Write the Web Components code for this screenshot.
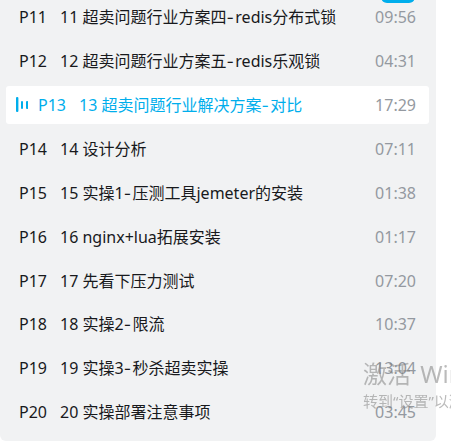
<!DOCTYPE html>
<html>
<head>
<meta charset="utf-8">
<style>
  html, body { margin: 0; height: 100%; overflow: hidden; background: #fff; }
</style>
</head>
<body>
<part-list>
  <part-row page="P11" time="09:56">11 超卖问题行业方案四<span class="dash">-</span>redis分布式锁</part-row>
  <part-row page="P12" time="04:31">12 超卖问题行业方案五<span class="dash">-</span>redis乐观锁</part-row>
  <part-row page="P13" time="17:29" active>13 超卖问题行业解决方案<span class="dash">-</span>对比</part-row>
  <part-row page="P14" time="07:11">14 设计分析</part-row>
  <part-row page="P15" time="01:38">15 实操1<span class="dash">-</span>压测工具jemeter的安装</part-row>
  <part-row page="P16" time="01:17">16 nginx+lua拓展安装</part-row>
  <part-row page="P17" time="07:20">17 先看下压力测试</part-row>
  <part-row page="P18" time="10:37">18 实操2<span class="dash">-</span>限流</part-row>
  <part-row page="P19" time="13:04">19 实操3<span class="dash">-</span>秒杀超卖实操</part-row>
  <part-row page="P20" time="03:45">20 实操部署注意事项</part-row>
</part-list>
<activation-mark></activation-mark>

<script>
class PartList extends HTMLElement {
  constructor() {
    super();
    this.attachShadow({ mode: "open" });
    this.shadowRoot.innerHTML = `
      <style>
        :host {
          display: block;
          width: 436px;
          height: 441px;
          box-sizing: border-box;
          padding: 0 7px 0 6px;
          background: #f1f2f3;
          border-radius: 0 0 6px 6px;
          font-family: "Noto Sans", "Noto Sans CJK SC", sans-serif;
          overflow: hidden;
          position: relative;
        }
        .rows {
          display: flex;
          flex-direction: column;
          gap: 5.9px;
          margin-top: -1.8px;
        }
        .blob {
          position: absolute;
          left: 381px;
          top: -9px;
          width: 34px;
          height: 12px;
          border-radius: 6px;
          background: #00aeec;
        }
      </style>
      <div class="rows"><slot></slot></div>
      <div class="blob"></div>
    `;
  }
}

class PartRow extends HTMLElement {
  constructor() {
    super();
    this.attachShadow({ mode: "open" });
  }

  connectedCallback() {
    const bars = this.hasAttribute("active") ? `
      <svg class="bars" width="12" height="15" viewBox="0 0 12 15">
        <rect x="0" y="0" width="2.4" height="15" rx="1"/>
        <rect x="5" y="4" width="2" height="8" rx="1"/>
        <rect x="10" y="4" width="2.2" height="8" rx="1"/>
      </svg>` : "";
    this.shadowRoot.innerHTML = `
      <style>
        :host {
          display: flex;
          align-items: center;
          height: 38px;
          padding: 0 13px;
          border-radius: 3px;
          font-size: 16px;
          line-height: 38px;
          color: #18191c;
        }
        :host([active]) {
          background: #fff;
          color: #00aeec;
          padding-left: 10px;
        }
        .bars { fill: #00aeec; margin-right: 10px; flex: none; }
        .page { width: 41px; flex: none; }
        .title { flex: 1; white-space: nowrap; overflow: hidden; }
        .time { color: #9499a0; flex: none; }
        ::slotted(.dash) { font-family: Inter, sans-serif; margin-right: 1.5px; }
      </style>
      ${bars}
      <span class="page">${this.getAttribute("page")}</span>
      <span class="title"><slot></slot></span>
      <span class="time">${this.getAttribute("time")}</span>
    `;
  }
}

class ActivationMark extends HTMLElement {
  constructor() {
    super();
    this.attachShadow({ mode: "open" });
    this.shadowRoot.innerHTML = `
      <style>
        :host {
          position: fixed;
          left: 363px;
          top: 357px;
          width: 88px;
          overflow: hidden;
          white-space: nowrap;
          color: rgba(120, 120, 120, 0.5);
          font-family: "Noto Sans", "Noto Sans CJK SC", sans-serif;
          pointer-events: none;
        }
        .big { font-size: 24px; line-height: 34px; word-spacing: 3px; }
        .small { font-size: 15px; line-height: 20px; }
      </style>
      <div class="big">激活 Windows</div>
      <div class="small">转到“设置”以激活 Windows。</div>
    `;
  }
}

customElements.define("part-list", PartList);
customElements.define("part-row", PartRow);
customElements.define("activation-mark", ActivationMark);
</script>
</body>
</html>
